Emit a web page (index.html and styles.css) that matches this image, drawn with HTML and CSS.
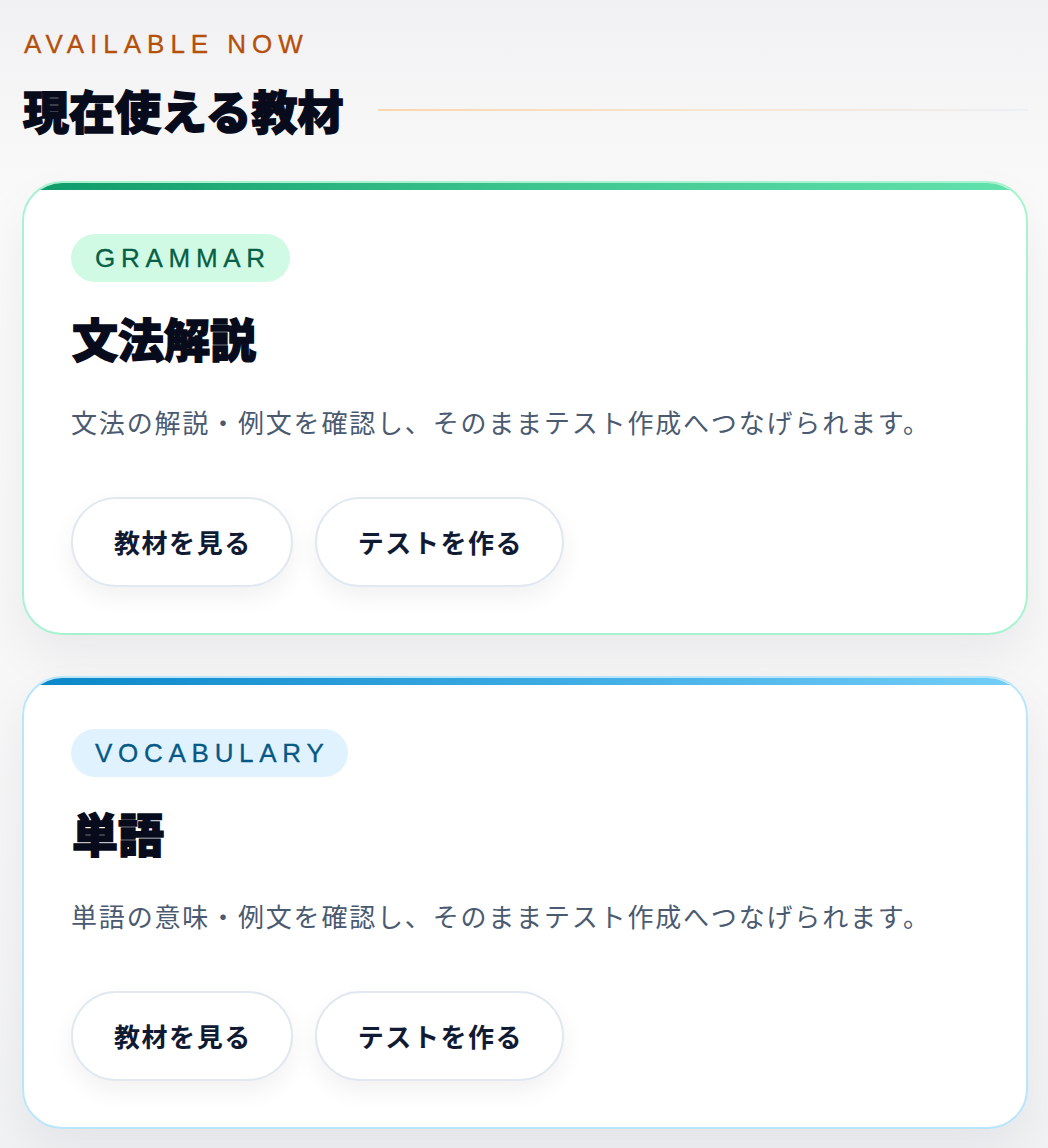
FILE: index.html
```html
<!DOCTYPE html>
<html lang="ja">
<head>
  <meta charset="UTF-8">
  <meta name="viewport" content="width=device-width, initial-scale=1.0">
  <title>現在使える教材</title>
  <link rel="stylesheet" href="styles.css">
</head>
<body>
  <section class="materials">
    <div class="eyebrow">AVAILABLE NOW</div>
    <div class="section-head">
      <h2>現在使える教材</h2>
      <div class="head-line"></div>
    </div>

    <div class="card card-grammar">
      <span class="badge">GRAMMAR</span>
      <h3>文法解説</h3>
      <p class="desc">文法の解説・例文を確認し、そのままテスト作成へつなげられます。</p>
      <div class="actions">
        <button class="pill">教材を見る</button>
        <button class="pill">テストを作る</button>
      </div>
    </div>

    <div class="card card-vocab">
      <span class="badge">VOCABULARY</span>
      <h3>単語</h3>
      <p class="desc">単語の意味・例文を確認し、そのままテスト作成へつなげられます。</p>
      <div class="actions">
        <button class="pill">教材を見る</button>
        <button class="pill">テストを作る</button>
      </div>
    </div>
  </section>
</body>
</html>
```

FILE: styles.css
```css
body {
  margin: 0;
  min-height: 100vh;
  font-family: "Liberation Sans", "Noto Sans CJK JP", sans-serif;
  background: linear-gradient(180deg, #f1f1f3 0%, #fafafa 18%, #f7f7f8 60%, #f1f2f4 100%);
  color: #0b1020;
}

.materials {
  padding: 29px 20px 40px 22px;
}

.eyebrow {
  margin-left: 2px;
  font-size: 26px;
  line-height: 1.2;
  font-weight: 500;
  letter-spacing: 0.23em;
  color: #b4500a;
  -webkit-text-stroke: 0.3px currentColor;
}

.section-head {
  display: flex;
  align-items: center;
  gap: 34px;
  margin-top: 22px;
  margin-bottom: 44px;
}

.section-head h2 {
  margin: 0 0 0 1px;
  font-family: "Noto Sans CJK JP", sans-serif;
  font-size: 46px;
  line-height: 1.2;
  font-weight: 900;
  color: #070b1c;
  white-space: nowrap;
  -webkit-text-stroke: 1.4px currentColor;
}

.head-line {
  flex: 1;
  height: 2px;
  background: linear-gradient(90deg, #fbd7ad 0%, #f8e6d4 60%, rgba(226, 232, 240, 0.5) 100%);
}

.card {
  position: relative;
  overflow: hidden;
  background: #fff;
  border: 2px solid #a7f3d0;
  border-radius: 40px;
  padding: 51px 47px 46px;
  box-shadow: 0 22px 50px rgba(15, 23, 42, 0.06);
}

.card + .card {
  margin-top: 41px;
}

.card::before {
  content: "";
  position: absolute;
  left: 0;
  right: 0;
  top: 0;
  height: 7px;
  background: linear-gradient(90deg, #0d9a6a 0%, #3cc48e 50%, #63e2ae 100%);
}

.card-vocab {
  border-color: #bae6fd;
}

.card-vocab::before {
  background: linear-gradient(90deg, #0a86c8 0%, #3aa9e2 50%, #74cff8 100%);
}

.badge {
  display: inline-block;
  height: 48px;
  line-height: 48px;
  padding: 0 19px 0 24px;
  border-radius: 24px;
  font-size: 26px;
  font-weight: 500;
  letter-spacing: 0.22em;
  background: #d1fae5;
  color: #065f46;
  -webkit-text-stroke: 0.3px currentColor;
}

.card-vocab .badge {
  background: #e0f2fe;
  color: #075985;
}

.card h3 {
  margin: 28px 0 0 1px;
  font-family: "Noto Sans CJK JP", sans-serif;
  font-size: 46px;
  line-height: 1.2;
  font-weight: 900;
  color: #070b1c;
  -webkit-text-stroke: 1.4px currentColor;
}

.desc {
  margin: 34px 0 0;
  font-family: "Noto Sans CJK JP", sans-serif;
  font-size: 26px;
  line-height: 1.7;
  letter-spacing: 0.07em;
  color: #4a5a70;
}

.actions {
  display: flex;
  gap: 22px;
  margin-top: 53px;
}

.pill {
  font-family: "Noto Sans CJK JP", sans-serif;
  font-size: 26px;
  line-height: 36px;
  font-weight: 700;
  letter-spacing: 0.06em;
  color: #111a33;
  background: #fff;
  border: 2px solid #e2e8f0;
  border-radius: 46px;
  padding: 25px 39px 25px 41px;
  box-shadow: 0 10px 24px rgba(15, 23, 42, 0.06);
  cursor: pointer;
}
```
